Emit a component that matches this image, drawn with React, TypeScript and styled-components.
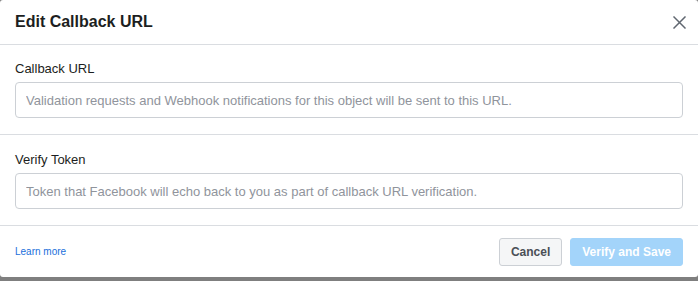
import React from "react";
import styled, { createGlobalStyle } from "styled-components";

const FONT = `"Liberation Sans", Arial, Helvetica, sans-serif`;

const GlobalStyle = createGlobalStyle`
  html, body {
    margin: 0;
    padding: 0;
    background: #7f7f7f;
    overflow: hidden;
  }
  body {
    font-family: ${FONT};
  }
  * { box-sizing: border-box; }
`;

const Page = styled.div`
  width: 698px;
  height: 281px;
  overflow: hidden;
`;

const Modal = styled.div`
  width: 698px;
  background: #ffffff;
  border-radius: 3px;
  display: flex;
  flex-direction: column;
`;

const Header = styled.div`
  height: 45px;
  padding: 0 7px 0 15px;
  display: flex;
  align-items: center;
  justify-content: space-between;
  border-bottom: 1px solid #dadde1;
`;

const Title = styled.h2`
  margin: 0;
  font-size: 16px;
  font-weight: 700;
  color: #1c1e21;
  line-height: 20px;
`;

const CloseButton = styled.button`
  width: 24px;
  height: 24px;
  border: none;
  background: transparent;
  padding: 0;
  display: flex;
  align-items: center;
  justify-content: center;
  cursor: pointer;
`;

const Section = styled.div<{ $top: number }>`
  padding: ${(p) => p.$top}px 15px 16px;
  display: flex;
  flex-direction: column;
  gap: 4px;
  border-bottom: 1px solid #dadde1;
`;

const Label = styled.label`
  font-size: 13px;
  line-height: 18px;
  color: #1c1e21;
`;

const Input = styled.input`
  height: 36px;
  width: 100%;
  border: 1px solid #ccd0d5;
  border-radius: 4px;
  padding: 0 10px;
  font-family: ${FONT};
  font-size: 13px;
  color: #1c1e21;
  outline: none;
  &::placeholder {
    color: #90949c;
  }
`;

const Footer = styled.div`
  height: 51px;
  padding: 0 15px;
  display: flex;
  align-items: center;
  justify-content: space-between;
`;

const LearnMore = styled.a`
  font-size: 10px;
  color: #216fdb;
  text-decoration: none;
`;

const Actions = styled.div`
  display: flex;
  gap: 8px;
`;

const Button = styled.button<{ $primary?: boolean }>`
  height: 28px;
  padding: 0 11px;
  border-radius: 3px;
  font-family: ${FONT};
  font-size: 12px;
  font-weight: 700;
  border: 1px solid ${(p) => (p.$primary ? "#a3d4fa" : "#ccd0d5")};
  background: ${(p) => (p.$primary ? "#a3d4fa" : "#f5f6f7")};
  color: ${(p) => (p.$primary ? "#ffffff" : "#4b4f56")};
  cursor: pointer;
`;

const Behind = styled.p`
  margin: 2px 0 0 8px;
  font-family: ${FONT};
  font-size: 16px;
  line-height: 20px;
  color: #0a0a0a;
  white-space: nowrap;
`;

export default function App() {
  return (
    <Page>
      <GlobalStyle />
      <Modal>
        <Header>
          <Title>Edit Callback URL</Title>
          <CloseButton aria-label="Close">
            <svg width="13" height="13" viewBox="0 0 13 13">
              <path d="M1 1 L12 12 M12 1 L1 12" stroke="#606770" strokeWidth="1.5" strokeLinecap="square" fill="none" />
            </svg>
          </CloseButton>
        </Header>
        <Section $top={15}>
          <Label>Callback URL</Label>
          <Input placeholder="Validation requests and Webhook notifications for this object will be sent to this URL." />
        </Section>
        <Section $top={16}>
          <Label>Verify Token</Label>
          <Input placeholder="Token that Facebook will echo back to you as part of callback URL verification." />
        </Section>
        <Footer>
          <LearnMore href="#">Learn more</LearnMore>
          <Actions>
            <Button>Cancel</Button>
            <Button $primary>Verify and Save</Button>
          </Actions>
        </Footer>
      </Modal>
      <Behind>To receive messages and other events sent by Messenger users, the app should enable webhooks integration.</Behind>
    </Page>
  );
}
